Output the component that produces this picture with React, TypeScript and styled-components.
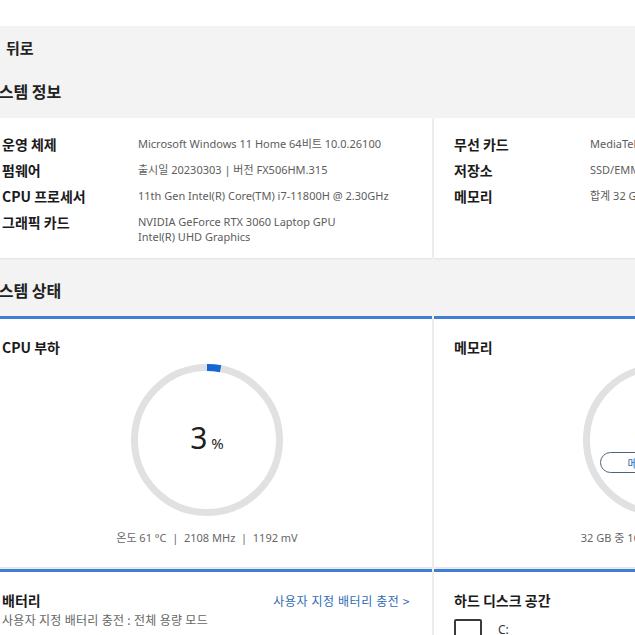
import React from 'react';
import styled, { createGlobalStyle } from 'styled-components';

const GlobalStyle = createGlobalStyle`
	html, body {
		margin: 0;
		padding: 0;
		background: #ffffff;
		overflow: hidden;
	}
	body {
		font-family: "Noto Sans", "Noto Sans CJK KR", sans-serif;
		color: #1b1b1b;
	}
`;

const Page = styled.div`
	margin-top: 26px;
	height: 609px;
	background: #f3f3f3;
	overflow: hidden;
`;

const Content = styled.div`
	margin-left: -18px;
	width: 902px;
`;

const BackRow = styled.div`
	height: 43px;
	display: flex;
	align-items: center;
	gap: 8px;
	font-family: "Noto Sans CJK KR", sans-serif;
	font-size: 15px;
	font-weight: 700;
	color: #222;
`;

const SectionTitle = styled.div<{ $top?: number }>`
	height: 44px;
	margin-top: ${(p) => p.$top ?? 0}px;
	padding-left: 2px;
	display: flex;
	align-items: center;
	font-family: "Noto Sans CJK KR", sans-serif;
	font-size: 16px;
	font-weight: 700;
	color: #222;
`;

const CardRow = styled.div<{ $top?: number }>`
	display: grid;
	grid-template-columns: 450px 450px;
	column-gap: 2px;
	margin-top: ${(p) => p.$top ?? 0}px;
`;

const Card = styled.div<{ $accent?: boolean; $height?: number }>`
	background: #ffffff;
	box-sizing: border-box;
	height: ${(p) => (p.$height ? `${p.$height}px` : 'auto')};
	border-top: ${(p) => (p.$accent ? '3px solid #3f80d2' : 'none')};
	box-shadow: 0 1px 2px rgba(0, 0, 0, 0.08);
	padding: 13px 20px 0 20px;
	position: relative;
`;

const InfoGrid = styled.div`
	display: grid;
	grid-template-columns: 136px 1fr;
`;

const InfoLabel = styled.div`
	font-family: "Noto Sans CJK KR", sans-serif;
	font-size: 14px;
	font-weight: 700;
	line-height: 26px;
	color: #1b1b1b;
	white-space: nowrap;
`;

const InfoValue = styled.div`
	padding-top: 5px;
	font-size: 11px;
	line-height: 15px;
	color: #5d5d5d;
	white-space: nowrap;
`;

const StatusCard = styled(Card)`
	padding-top: 18px;
	display: flex;
	flex-direction: column;
`;

const CardTitle = styled.div`
	font-family: "Noto Sans CJK KR", sans-serif;
	font-size: 14px;
	font-weight: 700;
	line-height: 20px;
	color: #1b1b1b;
	white-space: nowrap;
`;

const GaugeWrap = styled.div`
	position: relative;
	width: 156px;
	height: 156px;
	margin: 5px auto 0;
`;

const GaugeCenter = styled.div`
	position: absolute;
	inset: 0;
	display: flex;
	flex-direction: column;
	align-items: center;
	justify-content: center;
`;

const Percent = styled.div`
	display: flex;
	align-items: baseline;
	gap: 4px;
	color: #1f1f1f;
	font-size: 30px;
	line-height: 34px;
	font-weight: 400;
	span {
		font-size: 15px;
	}
`;

const Pill = styled.div`
	margin-top: 6px;
	height: 21px;
	box-sizing: border-box;
	padding: 0 26px;
	border: 1px solid #4d6578;
	border-radius: 11px;
	display: flex;
	align-items: center;
	font-family: "Noto Sans CJK KR", sans-serif;
	font-size: 11px;
	color: #2f6cb5;
	white-space: nowrap;
`;

const GaugeFoot = styled.div`
	margin-top: 12px;
	text-align: center;
	font-size: 11px;
	line-height: 16px;
	color: #666;
	white-space: nowrap;
`;

const BottomCard = styled(Card)`
	height: 80px;
	padding-top: 20px;
`;

const HeadLine = styled.div`
	display: flex;
	justify-content: space-between;
	align-items: center;
	height: 16px;
`;

const LinkText = styled.div`
	font-family: "Noto Sans CJK KR", sans-serif;
	font-size: 12px;
	letter-spacing: 0.6px;
	padding-right: 2px;
	color: #2f6cb5;
	white-space: nowrap;
`;

const SubText = styled.div`
	margin-top: 4px;
	font-family: "Noto Sans CJK KR", sans-serif;
	font-size: 12px;
	letter-spacing: 0.3px;
	line-height: 16px;
	color: #666;
	white-space: nowrap;
`;

const DriveRow = styled.div`
	margin-top: 11px;
	display: flex;
	align-items: center;
	gap: 16px;
	font-size: 12px;
	color: #333;
`;

const DriveIcon = styled.div`
	width: 24px;
	height: 16px;
	border: 2px solid #3a3a3a;
	border-radius: 2px;
`;

function Ring({ value }: { value: number }) {
	const r = 72.5;
	const c = 2 * Math.PI * r;
	return (
		<svg width="156" height="156" viewBox="0 0 156 156">
			<circle cx="78" cy="78" r={r} fill="none" stroke="#e1e1e1" strokeWidth="7" />
			<circle
				cx="78"
				cy="78"
				r={r}
				fill="none"
				stroke="#1766d6"
				strokeWidth="7"
				strokeDasharray={`${(c * value) / 100} ${c}`}
				transform="rotate(-90 78 78)"
			/>
		</svg>
	);
}

export default function App() {
	return (
		<>
			<GlobalStyle />
			<Page>
				<Content>
					<BackRow>
						<svg width="16" height="16" viewBox="0 0 16 16">
							<path d="M10 3 L5 8 L10 13" fill="none" stroke="#222" strokeWidth="1.6" />
						</svg>
						뒤로
					</BackRow>
					<SectionTitle>시스템 정보</SectionTitle>
					<CardRow $top={5}>
						<Card $height={140}>
							<InfoGrid>
								<InfoLabel>운영 체제</InfoLabel>
								<InfoValue>Microsoft Windows 11 Home 64비트 10.0.26100</InfoValue>
								<InfoLabel>펌웨어</InfoLabel>
								<InfoValue>출시일 20230303 | 버전 FX506HM.315</InfoValue>
								<InfoLabel>CPU 프로세서</InfoLabel>
								<InfoValue>11th Gen Intel(R) Core(TM) i7-11800H @ 2.30GHz</InfoValue>
								<InfoLabel>그래픽 카드</InfoLabel>
								<InfoValue>
									NVIDIA GeForce RTX 3060 Laptop GPU
									<br />
									Intel(R) UHD Graphics
								</InfoValue>
							</InfoGrid>
						</Card>
						<Card $height={140}>
							<InfoGrid>
								<InfoLabel>무선 카드</InfoLabel>
								<InfoValue>MediaTek Wi-Fi 6 MT7921 Wireless LAN Card</InfoValue>
								<InfoLabel>저장소</InfoLabel>
								<InfoValue>SSD/EMMC 512 GB</InfoValue>
								<InfoLabel>메모리</InfoLabel>
								<InfoValue>합계 32 GB</InfoValue>
							</InfoGrid>
						</Card>
					</CardRow>
					<SectionTitle $top={10}>시스템 상태</SectionTitle>
					<CardRow $top={4}>
						<StatusCard $accent $height={251}>
							<CardTitle>CPU 부하</CardTitle>
							<GaugeWrap>
								<Ring value={3} />
								<GaugeCenter>
									<Percent>
										3<span>%</span>
									</Percent>
								</GaugeCenter>
							</GaugeWrap>
							<GaugeFoot>온도 61 °C &nbsp;|&nbsp; 2108 MHz &nbsp;|&nbsp; 1192 mV</GaugeFoot>
						</StatusCard>
						<StatusCard $accent $height={251}>
							<CardTitle>메모리</CardTitle>
							<GaugeWrap>
								<Ring value={0} />
								<GaugeCenter>
									<Percent>
										52<span>%</span>
									</Percent>
									<Pill>메모리 최적화</Pill>
								</GaugeCenter>
							</GaugeWrap>
							<GaugeFoot>32 GB 중 16.6 GB 사용 중 (52 %)</GaugeFoot>
						</StatusCard>
					</CardRow>
					<CardRow $top={2}>
						<BottomCard $accent>
							<HeadLine>
								<CardTitle>배터리</CardTitle>
								<LinkText>사용자 지정 배터리 충전 &gt;</LinkText>
							</HeadLine>
							<SubText>사용자 지정 배터리 충전 : 전체 용량 모드</SubText>
						</BottomCard>
						<BottomCard $accent>
							<HeadLine>
								<CardTitle>하드 디스크 공간</CardTitle>
							</HeadLine>
							<DriveRow>
								<DriveIcon />
								C:
							</DriveRow>
						</BottomCard>
					</CardRow>
				</Content>
			</Page>
		</>
	);
}
